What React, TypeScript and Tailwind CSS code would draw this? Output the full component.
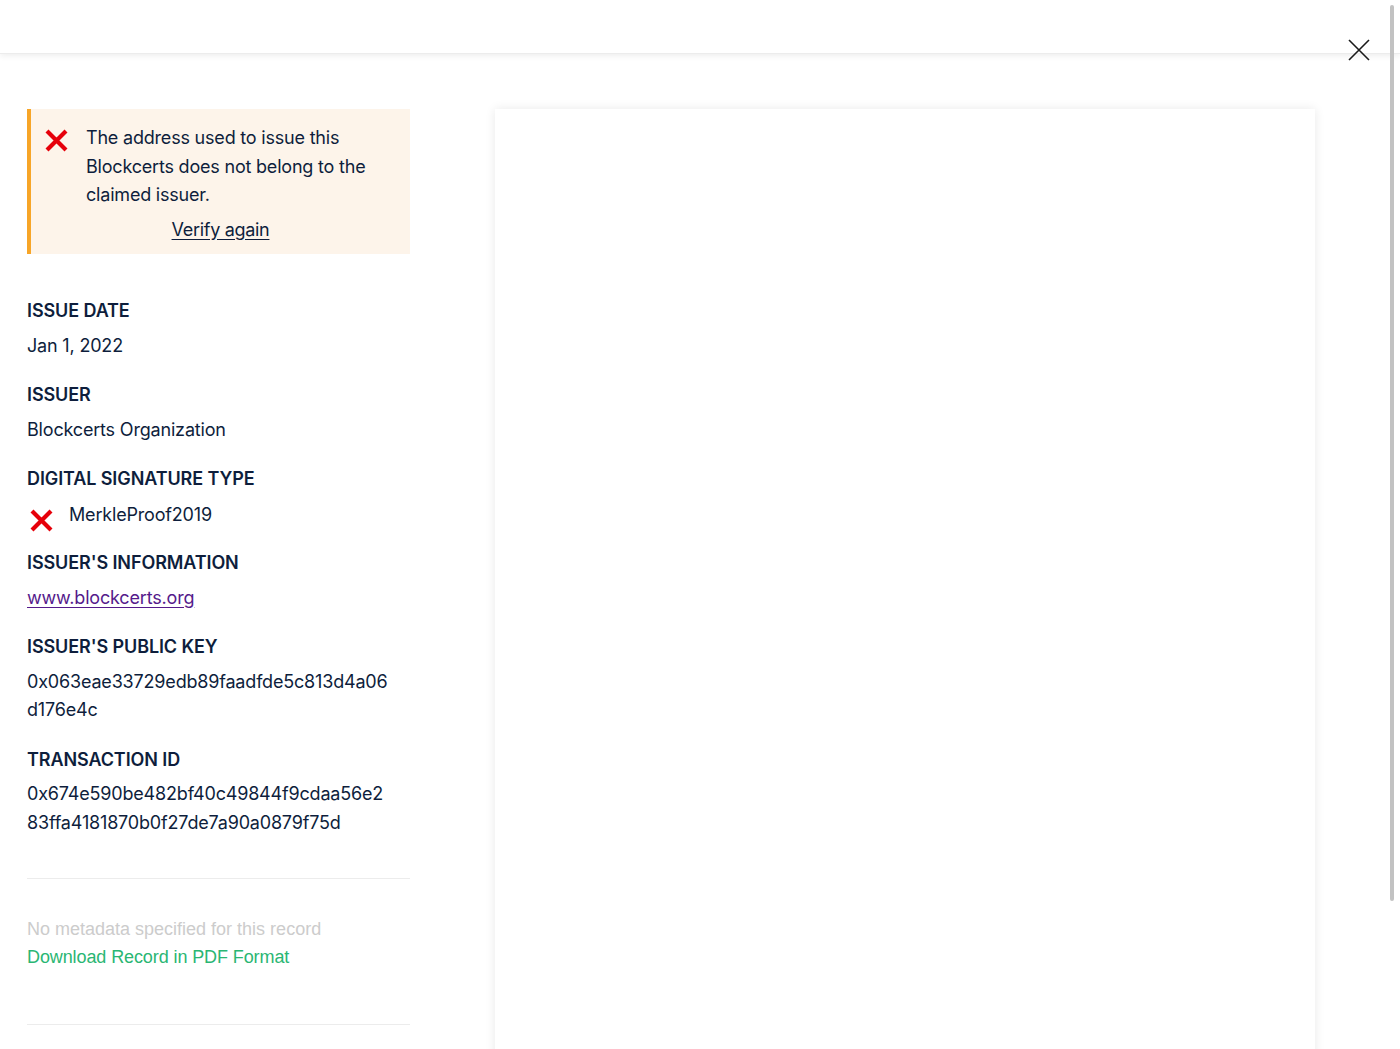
import React from "react";

function RedX({ className = "" }: { className?: string }) {
  return (
    <svg className={className} width="23" height="23" viewBox="0 0 23 23" fill="none">
      <path d="M2 2 L21 21 M21 2 L2 21" stroke="#e6000a" strokeWidth="4.2" strokeLinecap="butt" />
    </svg>
  );
}

function Item({ label, children }: { label: string; children: React.ReactNode }) {
  return (
    <div className="mb-[21px]">
      <div className="text-[18px] font-semibold leading-[28.5px] tracking-[-0.1px] uppercase text-[#0e1e3c] mb-[6px]">{label}</div>
      <div className="text-[18px] leading-[28.5px] tracking-[-0.18px] text-[#0e1e3c] break-all pr-[19px]">{children}</div>
    </div>
  );
}

export default function App() {
  return (
    <div className="relative h-[1049px] w-[1400px] overflow-hidden bg-white" style={{ fontFamily: "Inter, 'Noto Sans', sans-serif" }}>
      <header className="relative z-10 h-[54px] w-full bg-white border-b border-[#ececec] shadow-[0_2px_6px_rgba(0,0,0,0.07)]" />
      <button className="absolute left-[1348px] top-[39px] z-20 h-[22px] w-[22px]" aria-label="Close">
        <svg width="22" height="22" viewBox="0 0 22 22" fill="none">
          <path d="M1 1 L21 21 M21 1 L1 21" stroke="#1a1a1a" strokeWidth="1.6" />
        </svg>
      </button>
      <div className="absolute left-[1390px] top-[5px] z-30 h-[896px] w-[4px] rounded-full bg-[#c2c2c2]" />

      <main className="flex gap-[85px] pl-[27px] pt-[55px]">
        <aside className="w-[383px] shrink-0">
          <div className="bg-[#fdf4ea] border-l-[4px] border-[#f7a528] pt-[15px] pb-[10px]">
            <div className="flex items-start pl-[14px] pr-[12px]">
              <RedX className="mt-[5px] shrink-0" />
              <p className="ml-[18px] text-[18px] leading-[28.5px] tracking-[-0.2px] text-[#0e1e3c]">
                The address used to issue this Blockcerts does not belong to the claimed issuer.
              </p>
            </div>
            <div className="mt-[6px] text-center">
              <a href="#" className="text-[18px] leading-[28.5px] tracking-[-0.3px] text-[#0e1e3c] underline underline-offset-[3px]">Verify again</a>
            </div>
          </div>

          <div className="mt-[43px]">
            <Item label="Issue Date">Jan 1, 2022</Item>
            <Item label="Issuer">Blockcerts Organization</Item>
            <div className="mb-[20px]">
              <div className="text-[18px] font-semibold leading-[28.5px] tracking-[-0.1px] uppercase text-[#0e1e3c] mb-[7px]">Digital Signature Type</div>
              <div className="flex items-start h-[28.5px]">
                <RedX className="ml-[3px] mt-[8px] shrink-0" />
                <span className="ml-[16px] text-[18px] leading-[28.5px] tracking-[-0.18px] text-[#0e1e3c]">MerkleProof2019</span>
              </div>
            </div>
            <Item label="Issuer's Information">
              <a href="#" className="text-[#551a8b] underline underline-offset-[3px]">www.blockcerts.org</a>
            </Item>
            <Item label="Issuer's Public Key">0x063eae33729edb89faadfde5c813d4a06d176e4c</Item>
            <Item label="Transaction ID">0x674e590be482bf40c49844f9cdaa56e283ffa4181870b0f27de7a90a0879f75d</Item>
          </div>

          <div className="mt-[41px] border-t border-[#ececec]" />
          <div className="pt-[36px] pb-[53px]" style={{ fontFamily: "'Liberation Sans', Arial, sans-serif" }}>
            <p className="text-[18px] leading-[28px] text-[#cccccc]">No metadata specified for this record</p>
            <a href="#" className="block text-[18px] leading-[28px] tracking-[-0.1px] text-[#2ab673]">Download Record in PDF Format</a>
          </div>
          <div className="border-t border-[#ececec]" />
        </aside>

        <section className="w-[820px] shrink-0 h-[1100px] bg-white shadow-[0_0_10px_rgba(0,0,0,0.09)]" />
      </main>
    </div>
  );
}
